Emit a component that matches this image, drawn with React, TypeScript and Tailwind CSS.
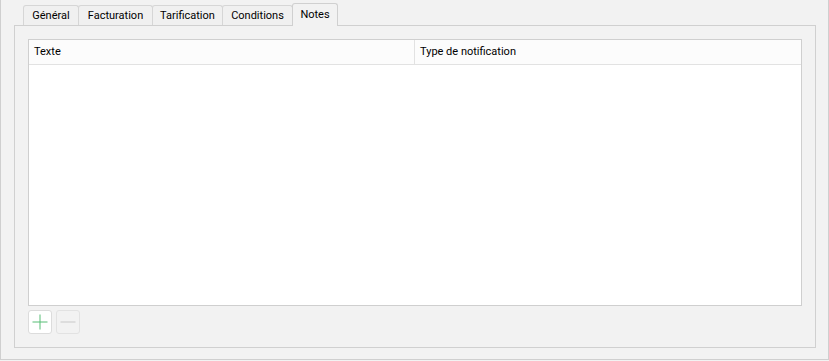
import React from "react";

const tabs = [
  { label: "Général", w: "w-[56px]" },
  { label: "Facturation", w: "w-[75px]" },
  { label: "Tarification", w: "w-[71px]" },
  { label: "Conditions", w: "w-[71px]" },
];

export default function App() {
  return (
    <div
      className="w-[829px] h-[361px] bg-[#f2f2f2] text-[11px] text-black"
      style={{ fontFamily: '"Segoe UI", Roboto, "Noto Sans", sans-serif' }}
    >
      <div className="h-[360px] border-l border-r border-b border-[#cfcfcf] pl-[13px] pr-[12px] flex flex-col">
        {/* tabs */}
        <div className="h-[26px] flex items-end pl-[9px] relative z-10">
          {tabs.map((t, i) => (
            <div
              key={t.label}
              className={`${t.w} ${i > 0 ? "-ml-px" : ""} h-[20px] mb-px border border-b-0 border-[#d6d6d6] rounded-t-[3px] bg-[#f0f0f0] flex items-center justify-center`}
            >
              <span className="leading-none">{t.label}</span>
            </div>
          ))}
          <div className="w-[46px] -ml-px h-[23px] border border-b-0 border-[#d0d0d0] rounded-t-[3px] bg-[#f2f2f2] flex items-start justify-center pt-[5px]">
            <span className="leading-none">Notes</span>
          </div>
        </div>
        {/* pane */}
        <div className="-mt-px h-[323px] border border-[#d0d0d0] bg-[#f2f2f2] p-[13px] pb-[13px] flex flex-col">
          <div className="h-[267px] border border-[#cfcfcf] bg-white flex flex-col">
            <div className="h-[25px] flex border-b border-[#e2e2e2] bg-[#fcfcfc]">
              <div className="w-[386px] border-r border-[#e2e2e2] flex items-center pl-[5px]">Texte</div>
              <div className="flex-1 flex items-center pl-[5px]">Type de notification</div>
            </div>
          </div>
          <div className="mt-[4px] flex gap-[4px]">
            <div className="w-[24px] h-[24px] rounded-[3px] border border-[#dcdcdc] bg-white flex items-center justify-center">
              <svg width="18" height="18" viewBox="0 0 18 18">
                <path d="M9 1.5v15M1.5 9h15" stroke="#56bd74" strokeWidth="1" fill="none" />
              </svg>
            </div>
            <div className="w-[24px] h-[24px] rounded-[3px] border border-[#e2e2e2] bg-[#f2f2f2] flex items-center justify-center">
              <svg width="18" height="18" viewBox="0 0 18 18">
                <path d="M1.5 9h15" stroke="#c8c8c8" strokeWidth="1" fill="none" />
              </svg>
            </div>
          </div>
        </div>
      </div>
    </div>
  );
}
